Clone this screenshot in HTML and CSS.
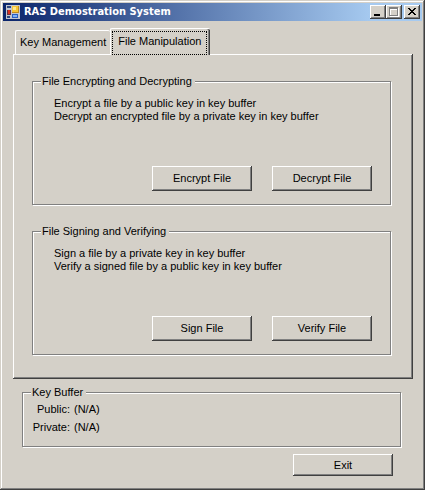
FILE: index.html
```html
<!DOCTYPE html>
<html lang="en">
<head>
<meta charset="utf-8">
<title>RAS Demostration System</title>
<link rel="stylesheet" href="styles.css">
</head>
<body>
<div class="window">
  <header class="titlebar">
    <svg class="app-icon" viewBox="0 0 14 14" aria-hidden="true" shape-rendering="crispEdges">
      <path fill="#c3c6cf" d="M0 0h14v14H0z"/>
      <path fill="#31487f" d="M1 1h4v2H1zM1 11h3v2H1z"/>
      <path fill="#6a3040" d="M1 5h4v5H1z"/>
      <path fill="#d8301e" d="M2 5h2v4H2z"/>
      <path fill="#c08a20" d="M6 1h7v7H6z"/>
      <path fill="#f7c534" d="M6 1h6v6H6z"/>
      <path fill="#ffe68c" d="M7 2h3v3H7z"/>
      <path fill="#2c5fc0" d="M6 9h6v4H6z"/>
      <path fill="#7fb0f8" d="M7 10h4v2H7z"/>
    </svg>
    <h1 class="title">RAS Demostration System</h1>
    <div class="controls">
      <button class="control" type="button" aria-label="Minimize">
        <svg viewBox="0 0 12 10" shape-rendering="crispEdges"><path d="M2 7h6v2H2z"/></svg>
      </button>
      <button class="control" type="button" aria-label="Maximize" disabled>
        <svg viewBox="0 0 12 10" shape-rendering="crispEdges"><path fill="#fff" fill-rule="evenodd" d="M2 1h9v9H2zM3 3v6h7V3z"/><path fill="#808080" fill-rule="evenodd" d="M1 0h9v9H1zM2 2v6h7V2z"/></svg>
      </button>
      <button class="control control-close" type="button" aria-label="Close">
        <svg viewBox="0 0 12 10" shape-rendering="crispEdges"><path d="M2 1h2v1h1v1h2V2h1V1h2v1H9v1H8v1H7v1h1v1h1v1h1v1H8V7H7V6H5v1H4v1H2V7h1V6h1V5h1V4H4V3H3V2H2z"/></svg>
      </button>
    </div>
  </header>

  <main class="client">
    <div class="tabs" role="tablist">
      <button class="tab" type="button" role="tab" id="tab-keys" aria-selected="false">Key Management</button>
      <button class="tab tab-active" type="button" role="tab" id="tab-files" aria-selected="true" aria-controls="panel-files"><span class="focus">File Manipulation</span></button>
    </div>

    <section class="panel" role="tabpanel" id="panel-files" aria-labelledby="tab-files">
      <fieldset class="group">
        <legend>File Encrypting and Decrypting</legend>
        <p class="hint">Encrypt a file by a public key in key buffer<br>Decrypt an encrypted file by a private key in key buffer</p>
        <div class="actions">
          <button class="button" type="button">Encrypt File</button>
          <button class="button" type="button">Decrypt File</button>
        </div>
      </fieldset>
      <fieldset class="group">
        <legend>File Signing and Verifying</legend>
        <p class="hint">Sign a file by a private key in key buffer<br>Verify a signed file by a public key in key buffer</p>
        <div class="actions">
          <button class="button" type="button">Sign File</button>
          <button class="button" type="button">Verify File</button>
        </div>
      </fieldset>
    </section>

    <fieldset class="group buffer">
      <legend>Key Buffer</legend>
      <dl class="keys">
        <dt>Public:</dt><dd>(N/A)</dd>
        <dt>Private:</dt><dd>(N/A)</dd>
      </dl>
    </fieldset>

    <div class="footer">
      <button class="button button-exit" type="button">Exit</button>
    </div>
  </main>
</div>
</body>
</html>
```
FILE: styles.css
```css
:root {
  --face: #d4d0c8;
  --light: #fff;
  --shadow: #808080;
  --dark: #404040;
}

* {
  box-sizing: border-box;
}

body {
  margin: 0;
  background: var(--face);
  color: #000;
  font: 11px/13px "Liberation Sans", Arial, sans-serif;
}

button {
  margin: 0;
  padding: 0;
  border: 0;
  background: var(--face);
  color: inherit;
  font: inherit;
}

.window {
  min-height: 100vh;
  padding: 3px;
  box-shadow: inset -1px -1px var(--dark), inset 1px 1px var(--face),
    inset -2px -2px var(--shadow), inset 2px 2px var(--light);
}

.titlebar {
  display: flex;
  align-items: center;
  height: 18px;
  padding: 0 2px 0 3px;
  background: linear-gradient(to right, #0a246a, #a6caf0 88%);
}

.app-icon {
  width: 14px;
  height: 14px;
}

.title {
  flex: 1;
  margin: 0 0 0 4px;
  color: #fff;
  font: bold 11px/16px "DejaVu Sans Condensed", "Noto Sans", sans-serif;
}

.controls {
  display: flex;
}

.control {
  width: 16px;
  height: 14px;
  padding: 2px;
  box-shadow: inset -1px -1px var(--dark), inset 1px 1px var(--light),
    inset -2px -2px var(--shadow);
}

.control svg {
  display: block;
  width: 12px;
  height: 10px;
}

.control-close {
  margin-left: 2px;
}

.client {
  padding: 7px 9px 10px 10px;
}

.tabs {
  display: flex;
  align-items: flex-end;
  padding-left: 2px;
}

.tab {
  height: 24px;
  padding: 0 4px;
  border-top: 1px solid var(--light);
  border-left: 1px solid var(--light);
  border-radius: 2px 2px 0 0;
}

.tab-active {
  position: relative;
  height: 27px;
  margin-bottom: -1px;
  padding: 2px 3px 1px 1px;
  box-shadow: inset -1px 0 var(--dark), inset -2px 0 var(--shadow);
}

.focus {
  display: block;
  padding: 3px 5px 6px;
  border: 1px dotted #000;
}

.panel {
  padding: 21px 22px 24px 19px;
  box-shadow: inset -1px -1px var(--dark), inset 1px 1px var(--light),
    inset -2px -2px var(--shadow);
}

.group {
  min-width: 0;
  margin: 0;
  padding: 0 18px 13px 8px;
  border: 1px solid var(--shadow);
  box-shadow: 1px 1px var(--light), inset 1px 1px var(--light);
}

.group + .group {
  margin-top: 20px;
}

.group legend {
  padding: 0 3px 0 1px;
  background: var(--face);
}

.hint {
  margin: 9px 0 43px 13px;
}

.actions {
  display: flex;
  justify-content: flex-end;
  gap: 20px;
}

.button {
  width: 100px;
  height: 25px;
  box-shadow: inset -1px -1px var(--dark), inset 1px 1px var(--light),
    inset -2px -2px var(--shadow);
}

.buffer {
  margin: 7px 12px 0 9px;
}

.keys {
  display: grid;
  grid-template-columns: 39px 1fr;
  gap: 5px 4px;
  margin: 4px 0 0;
}

.buffer {
  padding-bottom: 12px;
}

.keys dt {
  text-align: right;
}

.keys dd {
  margin: 0;
}

.footer {
  display: flex;
  justify-content: flex-end;
  padding: 7px 20px 0 0;
}

.button-exit {
  height: 22px;
}
```
